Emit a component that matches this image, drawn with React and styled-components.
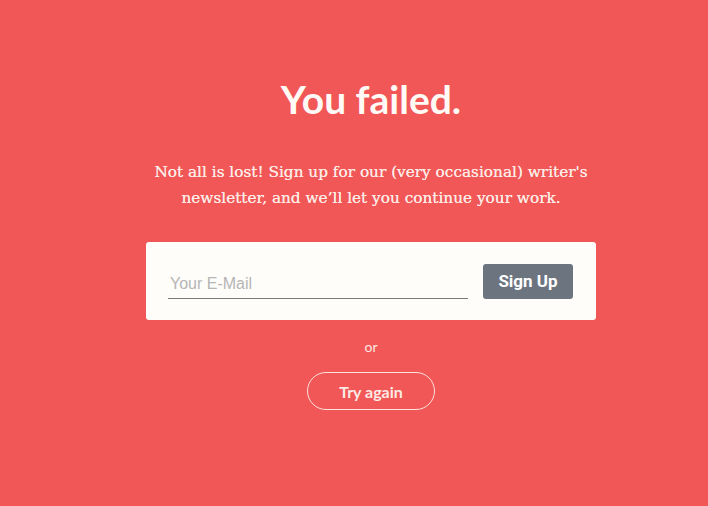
import React from 'react'
import styled, { createGlobalStyle } from 'styled-components'

const Global = createGlobalStyle`
  html, body {
    margin: 0;
    padding: 0;
    background: #f25757;
  }
`

function App() {
  return (
    <Page>
      <Global />
      <Title>You failed.</Title>
      <Message>
        Not all is lost! Sign up for our (very occasional) writer's
        <br />
        newsletter, and we’ll let you continue your work.
      </Message>
      <Card>
        <EmailInput placeholder="Your E-Mail" />
        <SignUpButton>Sign Up</SignUpButton>
      </Card>
      <Or>or</Or>
      <TryAgain>Try again</TryAgain>
    </Page>
  )
}

export default App

const Page = styled.div`
  min-height: 506px;
  box-sizing: border-box;
  padding: 71px 0 0 34px;
  display: flex;
  flex-direction: column;
  align-items: center;
  background: #f25757;
  color: #fffaf5;
`

const Title = styled.h1`
  margin: 0;
  font-family: Lato, sans-serif;
  font-weight: 700;
  font-size: 39px;
  line-height: 56px;
`

const Message = styled.p`
  margin: 32px 0 0;
  font-family: "DejaVu Serif", serif;
  font-size: 15.3px;
  line-height: 26px;
  text-align: center;
  color: #fcebe6;
  text-shadow: 0 0 0.4px #fcebe6;
`

const Card = styled.div`
  margin-top: 31px;
  width: 450px;
  height: 78px;
  box-sizing: border-box;
  padding: 0 23px 0 22px;
  display: flex;
  align-items: center;
  justify-content: space-between;
  background: #fffdfa;
  border-radius: 3px;
`

const EmailInput = styled.input`
  width: 296px;
  height: 28px;
  margin-top: 6px;
  padding: 0 2px;
  border: none;
  border-bottom: 1px solid #7a7a7a;
  background: transparent;
  outline: none;
  font-family: "Liberation Sans", Arial, sans-serif;
  font-size: 16px;
  color: #555;

  &::placeholder {
    color: #b5b5b5;
  }
`

const SignUpButton = styled.button`
  width: 90px;
  height: 35px;
  border: none;
  border-radius: 3px;
  background: #6c747f;
  color: #fff;
  font-family: Roboto, sans-serif;
  font-weight: 700;
  font-size: 17px;
  cursor: pointer;
`

const Or = styled.div`
  margin-top: 18px;
  font-family: Lato, sans-serif;
  font-size: 14px;
  color: #fbe9e4;
`

const TryAgain = styled.button`
  margin-top: 17px;
  width: 128px;
  height: 38px;
  border: 1px solid #fbe2dc;
  border-radius: 19px;
  background: transparent;
  color: #fbeae6;
  font-family: Lato, sans-serif;
  font-weight: 700;
  font-size: 16px;
  cursor: pointer;
`
